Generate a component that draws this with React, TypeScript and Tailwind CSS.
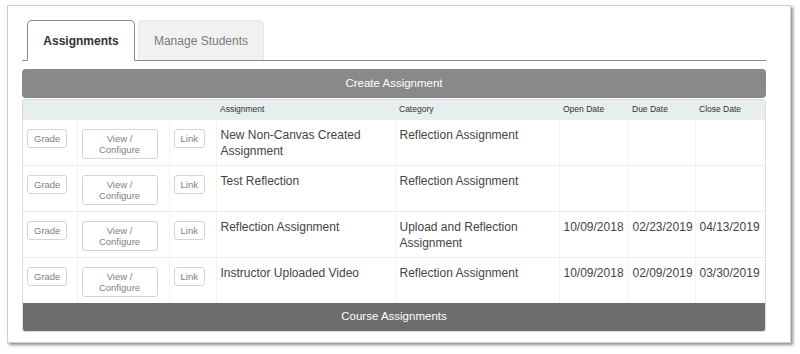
import React from 'react';

type Row = {
    name: string;
    category: string;
    open?: string;
    due?: string;
    close?: string;
};

const rows: Row[] = [
    { name: 'New Non-Canvas Created Assignment', category: 'Reflection Assignment' },
    { name: 'Test Reflection', category: 'Reflection Assignment' },
    { name: 'Reflection Assignment', category: 'Upload and Reflection Assignment', open: '10/09/2018', due: '02/23/2019', close: '04/13/2019' },
    { name: 'Instructor Uploaded Video', category: 'Reflection Assignment', open: '10/09/2018', due: '02/09/2019', close: '03/30/2019' },
];

const SmallButton: React.FC<{ children: React.ReactNode; className?: string }> = ({ children, className = '' }) => (
    <button className={`border border-[#d4d4d4] rounded-[3px] bg-white text-[#808080] text-[9.5px] leading-[11px] py-[3px] px-[6px] text-center ${className}`}>
        {children}
    </button>
);

const App: React.FC = () => {
    return (
        <div className="w-[800px] h-[354px] bg-white pt-[5px] pl-[7px]" style={{ fontFamily: '"Liberation Sans", Arial, sans-serif' }}>
            <div className="w-[784px] h-[338px] border border-[#cfcfcf] bg-white shadow-[2px_2px_3px_rgba(0,0,0,0.45)] pt-[15px] pl-[14px] pr-[24px]">
                {/* tabs */}
                <div className="flex items-end gap-[3px] pl-[5px] border-b border-[#8a8a8a] h-[40px]">
                    <div className="w-[108px] h-[41px] -mb-px border border-[#8a8a8a] border-b-white rounded-t-[5px] bg-white flex items-center justify-center text-[12px] font-bold text-[#333]">
                        Assignments
                    </div>
                    <div className="w-[126px] h-[40px] border border-[#e6e6e6] border-b-0 rounded-t-[5px] bg-[#f1f1f1] flex items-center justify-center text-[12px] text-[#7a7a7a]">
                        Manage Students
                    </div>
                </div>

                <div className="mt-[8px] h-[29px] rounded-[4px] bg-[#898989] flex items-center justify-center text-white text-[11.5px]">
                    Create Assignment
                </div>

                <div className="mt-[1px] border border-[#dcdcdc] rounded-[3px] overflow-hidden">
                    <table className="w-full table-fixed border-collapse">
                        <colgroup>
                            <col className="w-[54px]" />
                            <col className="w-[92px]" />
                            <col className="w-[47px]" />
                            <col className="w-[179px]" />
                            <col className="w-[164px]" />
                            <col className="w-[69px]" />
                            <col className="w-[67px]" />
                            <col />
                        </colgroup>
                        <thead>
                            <tr className="bg-[#e7eeee] h-[19px] text-[8.5px] text-[#333] text-left">
                                <th className="font-normal pl-[4px]"></th>
                                <th className="font-normal pl-[4px]"></th>
                                <th className="font-normal pl-[4px]"></th>
                                <th className="font-normal pl-[4px]">Assignment</th>
                                <th className="font-normal pl-[4px]">Category</th>
                                <th className="font-normal pl-[4px]">Open Date</th>
                                <th className="font-normal pl-[4px]">Due Date</th>
                                <th className="font-normal pl-[4px]">Close Date</th>
                            </tr>
                        </thead>
                        <tbody>
                            {rows.map((r, i) => (
                                <tr key={i} className="h-[46px] border-t border-[#ececec] align-top text-[12px] leading-[16px] text-[#444]">
                                    <td className="pl-[4px] pt-[9px] border-r border-[#f3f3f3]">
                                        <SmallButton>Grade</SmallButton>
                                    </td>
                                    <td className="pl-[4px] pt-[9px] border-r border-[#f3f3f3]">
                                        <SmallButton className="w-[76px]">View /<br />Configure</SmallButton>
                                    </td>
                                    <td className="pl-[4px] pt-[9px] border-r border-[#f3f3f3]">
                                        <SmallButton>Link</SmallButton>
                                    </td>
                                    <td className="pl-[4px] pr-[5px] pt-[7px] border-r border-[#f3f3f3]">{r.name}</td>
                                    <td className="pl-[4px] pr-[5px] pt-[7px] border-r border-[#f3f3f3]">{r.category}</td>
                                    <td className="pl-[4px] pt-[7px] border-r border-[#f3f3f3]">{r.open}</td>
                                    <td className="pl-[4px] pt-[7px] border-r border-[#f3f3f3]">{r.due}</td>
                                    <td className="pl-[4px] pt-[7px]">{r.close}</td>
                                </tr>
                            ))}
                        </tbody>
                    </table>
                    <div className="h-[28px] bg-[#6d6d6d] flex items-center justify-center text-white text-[11.5px]">
                        Course Assignments
                    </div>
                </div>
            </div>
        </div>
    );
};

export default App;
